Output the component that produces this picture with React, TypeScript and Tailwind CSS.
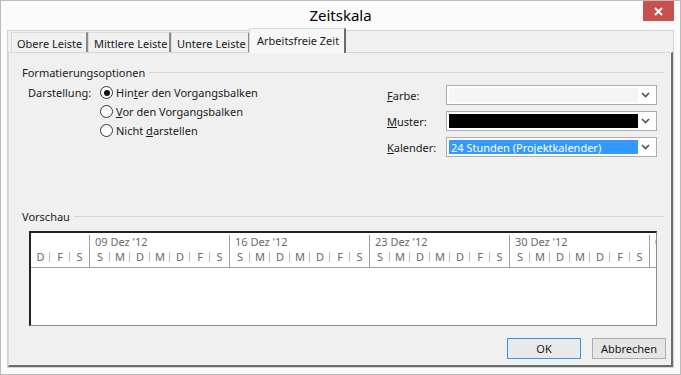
import React from 'react';

const weekDays = ['S', 'M', 'D', 'M', 'D', 'F', 'S'];
const weeks = ["09 Dez '12", "16 Dez '12", "23 Dez '12", "30 Dez '12"];

function Chevron() {
  return (
    <svg width="9" height="6" viewBox="0 0 9 6" className="shrink-0">
      <path d="M1 1 L4.5 4.5 L8 1" fill="none" stroke="#505050" strokeWidth="1.6" />
    </svg>
  );
}

function Combo({ fill, text }: { fill: string; text?: string }) {
  return (
    <div className="w-[211px] h-[20px] border border-[#acacac] bg-white flex items-center pl-[2px] pr-[6px]">
      <div className={`h-[14px] w-[189px] ${fill} flex items-center pl-[2px] text-white whitespace-nowrap`}>{text}</div>
      <div className="flex-1 flex justify-end">
        <Chevron />
      </div>
    </div>
  );
}

function Radio({ checked, children }: { checked?: boolean; children: React.ReactNode }) {
  return (
    <div className="h-[19px] flex items-center gap-[3px] whitespace-nowrap">
      <div className="w-[13px] h-[13px] rounded-full border border-[#333] bg-white flex items-center justify-center">
        {checked && <div className="w-[6px] h-[6px] rounded-full bg-[#111]" />}
      </div>
      <span>{children}</span>
    </div>
  );
}

function Tick() {
  return <div className="absolute right-0 top-[4px] h-[10px] w-px bg-[#bcbcbc]" />;
}

function DayCell({ d, w, tick }: { d: string; w: string; tick: boolean }) {
  return (
    <div className={`relative ${w} h-full flex items-center justify-center pb-[2px]`}>
      <span>{d}</span>
      {tick && <Tick />}
    </div>
  );
}

function Week({ date }: { date: string }) {
  return (
    <div className="w-[140px] shrink-0 mt-[2px] border-l border-[#a0a0a0] flex flex-col">
      <div className="h-[13px] pl-[5px] flex items-center whitespace-nowrap">{date}</div>
      <div className="h-[19px] flex">
        {weekDays.map((d, i) => (
          <DayCell key={i} d={d} w={i === 6 ? 'w-[19px]' : 'w-[20px]'} tick={i !== 6} />
        ))}
      </div>
    </div>
  );
}

function Tab({ label, w, active }: { label: string; w: string; active?: boolean }) {
  if (active) {
    return (
      <div className={`${w} h-[25px] -ml-[1px] border-t border-l border-[#d9d9d9] border-r-2 border-r-[#6d6d6d] bg-[#f7f7f7] flex items-start pt-[6px] pl-[7px] relative z-10 -mb-[1px] whitespace-nowrap`}>
        {label}
      </div>
    );
  }
  return (
    <div className={`${w} h-[20px] border-t border-l border-[#dadada] border-r-2 border-r-[#8a8a8a] bg-[#f0f0f0] flex items-center pl-[5px] pt-[1px] whitespace-nowrap`}>
      {label}
    </div>
  );
}

export default function App() {
  return (
    <div className="w-[681px] h-[375px] border border-[#bcbcbc] bg-[#fbfbfb] flex flex-col font-['Noto_Sans',sans-serif] text-[11px] text-[#1a1a1a] leading-none overflow-hidden">
      <div className="h-[29px] shrink-0 relative flex items-center justify-center">
        <span className="text-[15px] text-black">Zeitskala</span>
        <div className="absolute right-[6px] top-0 w-[31px] h-[20px] bg-[#c75050] flex items-center justify-center">
          <svg width="9" height="9" viewBox="0 0 9 9">
            <path d="M1 1 L8 8 M8 1 L1 8" stroke="white" strokeWidth="2" />
          </svg>
        </div>
      </div>

      <div className="flex-1 mx-[6px] mb-[6px] border border-[#d4d4d4] bg-[#f0f0f0] flex flex-col">
        <div className="h-[21px] shrink-0 flex items-end pl-[3px]">
          <Tab label="Obere Leiste" w="w-[77px]" />
          <Tab label="Mittlere Leiste" w="w-[83px]" />
          <Tab label="Untere Leiste" w="w-[79px]" />
          <Tab label="Arbeitsfreie Zeit" w="w-[97px]" active />
        </div>

        <div className="flex-1 border-t border-l border-[#d9d9d9] border-r-2 border-b-2 border-r-[#6d6d6d] border-b-[#6d6d6d] flex flex-col pl-[13px] pr-[5px]">
          <div className="mt-[11px] h-[16px] flex items-center gap-[4px] pr-[2px]">
            <span>Formatierungsoptionen</span>
            <div className="flex-1 h-px bg-[#d5d5d5]" />
          </div>

          <div className="mt-[3px] flex">
            <div className="w-[365px] pl-[6px] flex">
              <div className="w-[72px] h-[19px] flex items-center">Darstellung:</div>
              <div className="flex flex-col">
                <Radio checked>
                  Hin<u>t</u>er den Vorgangsbalken
                </Radio>
                <Radio>
                  <u>V</u>or den Vorgangsbalken
                </Radio>
                <Radio>
                  Nicht <u>d</u>arstellen
                </Radio>
              </div>
            </div>
            <div className="mt-[2px] flex flex-col gap-[6px]">
              <div className="flex items-center">
                <span className="w-[59px] pt-[1px]"><u>F</u>arbe:</span>
                <Combo fill="bg-[#f5f5f5]" />
              </div>
              <div className="flex items-center">
                <span className="w-[59px] pt-[1px]"><u>M</u>uster:</span>
                <Combo fill="bg-black" />
              </div>
              <div className="flex items-center">
                <span className="w-[59px] pt-[1px]"><u>K</u>alender:</span>
                <Combo fill="bg-[#3399ff]" text="24 Stunden (Projektkalender)" />
              </div>
            </div>
          </div>

          <div className="mt-[51px] h-[16px] flex items-center gap-[4px] pr-[2px]">
            <span>Vorschau</span>
            <div className="flex-1 h-px bg-[#d5d5d5]" />
          </div>

          <div className="mt-[7px] ml-[7px] w-[628px] h-[95px] border-t-2 border-l-2 border-t-[#222] border-l-[#222] border-r border-b border-r-[#8c8c8c] border-b-[#8c8c8c] bg-white overflow-hidden">
            <div className="flex h-[35px] border-b border-[#a0a0a0] text-[#6a6a6a] overflow-hidden">
              <div className="w-[58px] shrink-0 flex flex-col mt-[2px]">
                <div className="h-[13px]" />
                <div className="h-[19px] flex">
                  <DayCell d="D" w="w-[19px]" tick />
                  <DayCell d="F" w="w-[20px]" tick />
                  <DayCell d="S" w="w-[19px]" tick={false} />
                </div>
              </div>
              {weeks.map((w) => (
                <Week key={w} date={w} />
              ))}
              <div className="w-[7px] shrink-0 mt-[2px] border-l border-[#a0a0a0] overflow-hidden">
                <div className="h-[13px] pl-[5px] flex items-center whitespace-nowrap">06</div>
              </div>
            </div>
          </div>

          <div className="mt-[12px] flex justify-end gap-[11px]">
            <button className="w-[74px] h-[21px] border border-[#3c8fe6] bg-[#e9e9e9] flex items-center justify-center">
              OK
            </button>
            <button className="w-[74px] h-[21px] border border-[#adadad] bg-[#e5e5e5] flex items-center justify-center">
              Abbrechen
            </button>
          </div>
        </div>
      </div>
    </div>
  );
}
